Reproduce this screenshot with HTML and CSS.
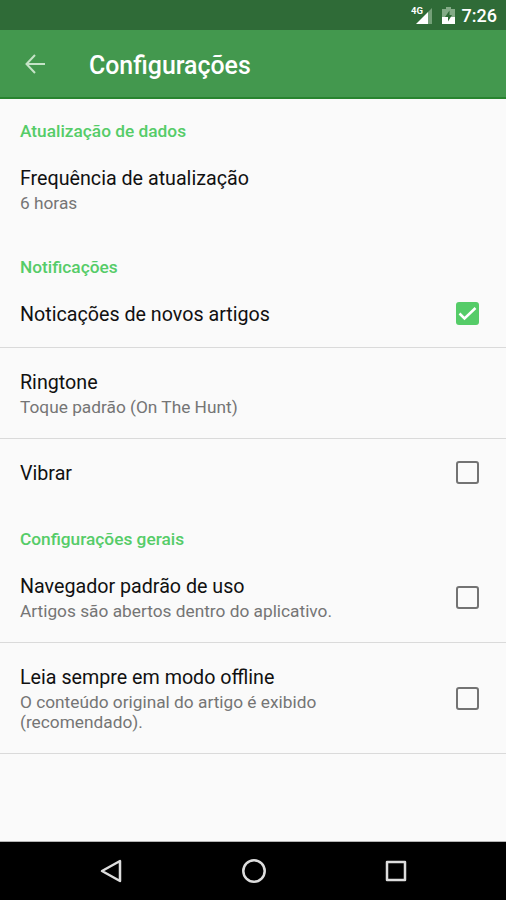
FILE: index.html
```html
<!DOCTYPE html>
<html lang="pt-BR">
<head>
<meta charset="utf-8">
<title>Configurações</title>
<link rel="stylesheet" href="styles.css">
</head>
<body>
<div class="status">
  <svg class="signal" width="22" height="20" viewBox="0 0 22 20"><path d="M21 3V19H17V7Z" fill="#74a078"/><path d="M17 7V19H5Z" fill="#fff"/><text x="0" y="9" class="network">4G</text></svg>
  <svg class="battery" width="13" height="17" viewBox="0 0 13 17"><path d="M4 0h5v2h4v8H0V2h4Z" fill="#84ab87"/><path d="M0 10h13v7H0Z" fill="#fff"/><path d="M7.500 3.500 3 10h3v4.500L10 8H7.500Z" fill="#2f6b37"/></svg>
  <span class="clock">7:26</span>
</div>
<header class="bar">
  <svg width="20" height="20" viewBox="0 0 20 20" fill="none" stroke="#c5e3c7" stroke-width="2"><path d="M20 10H2M10 1 1.500 10 10 19"/></svg>
  <h1>Configurações</h1>
</header>
<main>
  <h2>Atualização de dados</h2>
  <section class="row frequency"><div><p class="title">Frequência de atualização</p><p class="sub">6 horas</p></div></section>
  <h2>Notificações</h2>
  <section class="row news"><p class="title">Noticações de novos artigos</p><i class="box checked"><svg width="23" height="23" viewBox="0 0 23 23"><path d="m3.500 11.500 5 5L19.500 6" fill="none" stroke="#fff" stroke-width="2.500"/></svg></i></section>
  <section class="row ringtone"><div><p class="title">Ringtone</p><p class="sub">Toque padrão (On The Hunt)</p></div></section>
  <section class="row vibrate"><p class="title">Vibrar</p><i class="box"></i></section>
  <h2>Configurações gerais</h2>
  <section class="row browser"><div><p class="title">Navegador padrão de uso</p><p class="sub">Artigos são abertos dentro do aplicativo.</p></div><i class="box"></i></section>
  <section class="row offline"><div><p class="title">Leia sempre em modo offline</p><p class="sub">O conteúdo original do artigo é exibido<br>(recomendado).</p></div><i class="box"></i></section>
</main>
<nav>
  <svg width="26" height="26" viewBox="0 0 26 26"><path d="M21 3V23L3 13Z"/></svg>
  <svg width="26" height="26" viewBox="0 0 26 26"><circle cx="13" cy="13" r="10.700"/></svg>
  <svg width="26" height="26" viewBox="0 0 26 26"><path d="M4 4H22V22H4Z"/></svg>
</nav>
</body>
</html>
```
FILE: styles.css
```css
* { box-sizing: border-box; margin: 0; padding: 0; }
body { width: 506px; height: 900px; display: flex; flex-direction: column; overflow: hidden; background: #fafafa; font-family: Roboto, sans-serif; }
.status { height: 30px; background: #2f6b37; display: flex; align-items: center; justify-content: flex-end; padding-right: 9px; color: #fff; }
.signal { margin-right: 9px; }
.battery { margin-right: 7px; }
.network { font-size: 9.5px; font-weight: 700; fill: #fff; }
.clock { font-size: 18px; font-weight: 500; line-height: 30px; padding-top: 1px; }
.bar { height: 69px; background: #43984e; display: flex; align-items: center; padding: 0 0 0 25px; gap: 44px; border-bottom: 2px solid #28842f; }
h1 { color: #fff; font-size: 24.9px; line-height: 30px; font-weight: 500; padding-top: 4px; }
main { flex: 1; display: flex; flex-direction: column; border-bottom: 1px solid #b5b5b5; }
h2 { height: 46px; padding: 22px 20px 0; font-size: 17.3px; line-height: 20px; font-weight: 500; color: #55cc68; }
.row { display: flex; justify-content: space-between; align-items: center; padding: 0 27px 0 20px; border-bottom: 1px solid #dadada; }
.title { font-size: 19.68px; line-height: 26px; padding-top: 1px; margin-bottom: -1px; color: #111; }
.sub { font-size: 17.3px; line-height: 20px; padding-top: 2px; color: #757575; }
.frequency { height: 90px; border: 0; padding-bottom: 2px; }
.news { height: 67px; }
.ringtone { height: 91px; }
.vibrate { height: 68px; border: 0; }
.browser { height: 90px; padding-bottom: 1px; }
.offline { height: 111px; }
.box { width: 23px; height: 23px; margin-bottom: 2px; border: 2px solid #737373; border-radius: 3px; }
.browser .box, .offline .box { margin-bottom: 0; }
.checked { border: 0; background: #55cc68; }
.checked svg { display: block; }
nav { height: 58px; background: #000; display: flex; justify-content: center; align-items: center; gap: 116px; padding-left: 1px; }
nav svg { fill: none; stroke: #ddd; stroke-width: 2.500; stroke-linejoin: round; }
```
